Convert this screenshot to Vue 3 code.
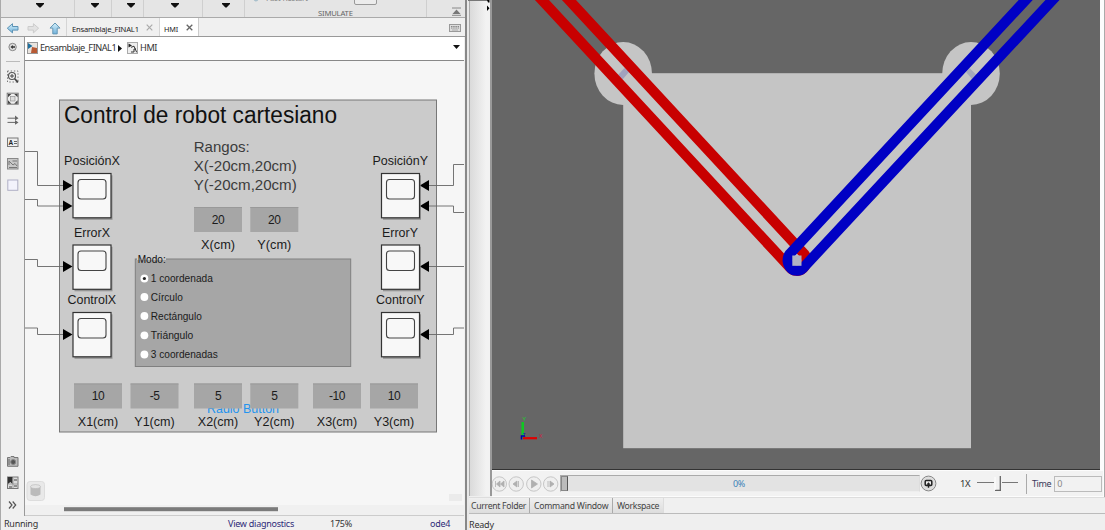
<script setup>
const ribbonGroups = [
  { id: 'a', cls: 'g1' }, { id: 'b', cls: 'g2' }, { id: 'c', cls: 'g3' }, { id: 'd', cls: 'g4' }, { id: 'e', cls: 'g5' }
]
const scopes = [
  { x: 73, y: 173.5, label: 'PosiciónX', lx: 64, w: 56 },
  { x: 73, y: 245, label: 'ErrorX', lx: 74, w: 36 },
  { x: 73, y: 312.5, label: 'ControlX', lx: 67.5, w: 48.5 },
  { x: 381.5, y: 173.5, label: 'PosiciónY', lx: 372.5, w: 55.5 },
  { x: 381.5, y: 245, label: 'ErrorY', lx: 382, w: 36 },
  { x: 381.5, y: 312.5, label: 'ControlY', lx: 376, w: 48.5 }
]
const wires = [
  'M25 151.5H37.5V185.5H64', 'M25 199.5H37.5V206H64', 'M25 259.5H37.5V266.5H64', 'M25 328H37.5V334.5H64',
  'M464 164.5H453.5V185.5H428', 'M464 212.5H453.5V206H428', 'M464 266.5H428', 'M464 328H453.5V334.5H428'
]
const heads = [185.5, 206, 266.5, 334.5]
const ranges = [
  { t: 'Rangos:', y: 151.5, w: 56 }, { t: 'X(-20cm,20cm)', y: 170.5, w: 103 }, { t: 'Y(-20cm,20cm)', y: 189.5, w: 103 }
]
const edits = [
  { x: 194, y: 207, v: '20', l: 'X(cm)', ly: 249, w: 34 },
  { x: 250.3, y: 207, v: '20', l: 'Y(cm)', ly: 249, w: 34 },
  { x: 74, y: 383.5, v: '10', l: 'X1(cm)', ly: 426, w: 40.5 },
  { x: 130.5, y: 383.5, v: '-5', l: 'Y1(cm)', ly: 426, w: 40.5 },
  { x: 194, y: 383.5, v: '5', l: 'X2(cm)', ly: 426, w: 40.5 },
  { x: 250.3, y: 383.5, v: '5', l: 'Y2(cm)', ly: 426, w: 40.5 },
  { x: 313, y: 383.5, v: '-10', l: 'X3(cm)', ly: 426, w: 40.5 },
  { x: 370, y: 383.5, v: '10', l: 'Y3(cm)', ly: 426, w: 40.5 }
]
const modes = [
  { t: '1 coordenada', y: 278.5, w: 62, on: true }, { t: 'Círculo', y: 297, w: 32 }, { t: 'Rectángulo', y: 316, w: 51 },
  { t: 'Triángulo', y: 335.3, w: 42.5 }, { t: '3 coordenadas', y: 354.5, w: 67 }
]
</script>

<template>
  <div class="screen">
    <section class="editor">
      <header class="ribbon">
        <div v-for="g in ribbonGroups" :key="g.id" class="rgroup" :class="g.cls">
          <svg width="8" height="5" viewBox="0 0 8 5"><path d="M0 0H8V1L4.6 4.5H3.4L0 1Z" fill="#111" /></svg>
        </div>
        <div class="simgroup">
          <svg class="simtop" width="182" height="8" viewBox="245 0 182 8">
            <circle cx="256" cy="-1" r="2.4" fill="#a9c0cc" />
            <text x="266" y="1.3" font-size="8" fill="#888" textLength="42">Fast Restart</text>
            <rect x="354.5" y="-8" width="22" height="12.5" rx="1.5" fill="#ececec" stroke="#999" />
          </svg>
          <span class="simlabel">SIMULATE</span>
        </div>
        <svg class="collapse" width="9" height="9" viewBox="0 0 9 9"><path d="M0 1H9M0 8.3H9" stroke="#888" /><path d="M4.5 2.5L8.5 7H.5Z" fill="#777" /></svg>
      </header>

      <nav class="tabs">
        <svg class="nav" width="66" height="18" viewBox="0 0 66 18">
          <defs><linearGradient id="sky" x1="0" y1="0" x2="0" y2="1"><stop offset="0" stop-color="#d5f1fb" /><stop offset="1" stop-color="#72b2dc" /></linearGradient></defs>
          <path d="M7.3 10.2L12.5 5.7V8.5H18V12.1H12.5V14.9Z" fill="url(#sky)" stroke="#5c93b5" />
          <path d="M38.6 10.2L33.4 5.7V8.5H28V12.1H33.4V14.9Z" fill="#e2e2e2" stroke="#ccc" />
          <path d="M55 5L60 10.1H57.2V15.9H52.8V10.1H50Z" fill="url(#sky)" stroke="#6597b5" />
        </svg>
        <div class="tab first"><span>Ensamblaje_FINAL1</span><svg width="7" height="7" viewBox="0 0 7 7"><path d="M.7.7L6.3 6.3M6.3.7L.7 6.3" stroke="#aaa" stroke-width="1.2" /></svg></div>
        <div class="tab active"><span>HMI</span><svg width="7" height="7" viewBox="0 0 7 7"><path d="M.7.7L6.3 6.3M6.3.7L.7 6.3" stroke="#666" stroke-width="1.3" /></svg></div>
        <svg class="keyb" width="12" height="8" viewBox="0 0 12 8"><rect x=".5" y=".5" width="11" height="7" fill="#ddd" stroke="#999" /><path d="M2 2.5H10M2 4H10" stroke="#888" stroke-dasharray="1.5 .7" /><path d="M3 6H9" stroke="#aaa" /></svg>
      </nav>

      <div class="workspace">
        <aside class="tools">
          <svg width="24" height="479" viewBox="0 37 24 479">
            <circle cx="12.6" cy="47" r="3.7" fill="#ddd" stroke="#888" /><path d="M10.5 47L12.8 45V46.2H15V47.8H12.8V49Z" fill="#333" />
            <path d="M6 61.5H20" stroke="#bbb" />
            <rect x="7.5" y="71" width="10.5" height="11" fill="none" stroke="#777" stroke-dasharray="1.4 1.8" />
            <circle cx="12" cy="76" r="3.5" fill="#f3f3f3" stroke="#555" stroke-width="1.2" /><path d="M12 74V78M10 76H14" stroke="#444" /><path d="M14.7 78.8L18 82.4" stroke="#444" stroke-width="1.7" />
            <rect x="7.2" y="93.2" width="11" height="11" fill="#eee" stroke="#777" /><path d="M8 97.3V94H11.3ZM14.2 94H17.6V97.3ZM8 100.3V103.7H11.3ZM17.6 100.3V103.7H14.2Z" fill="#444" /><rect x="10.5" y="96.5" width="4.5" height="4.5" fill="#ddd" stroke="#888" stroke-width=".6" />
            <path d="M7.5 118.2H17M7.5 122.4H17" stroke="#666" /><path d="M15 115.6L18.5 118.2L15 120.6ZM15 120L18.5 122.4L15 124.8Z" fill="#666" />
            <rect x="7.5" y="138" width="10.5" height="8.5" fill="#eee" stroke="#777" /><text x="8.5" y="145" font-size="6.5" font-weight="bold" fill="#222">A</text><path d="M14 141.5H17M14 143.5H17" stroke="#666" />
            <rect x="7.5" y="158.5" width="10.5" height="10.5" fill="#c8c8c8" stroke="#888" /><path d="M9 165V161L11 163L13 165L15 163.5L17 166M9 167.5H17M12.5 161H17" fill="none" stroke="#777" />
            <rect x="7.8" y="180" width="10" height="10.3" fill="#f3f3fc" stroke="#b0b0c5" />
            <path d="M7.5 457.5H10L11 456.5H14V457.5H18V466.3H7.5Z" fill="#bbb" stroke="#777" /><circle cx="13.2" cy="462" r="2.5" fill="#555" stroke="#888" /><path d="M9 459V465" stroke="#666" />
            <rect x="7.5" y="477" width="10.5" height="11.5" fill="#ddd" stroke="#777" /><path d="M8 477H12.5V484L10.3 482L8 484Z" fill="#333" /><path d="M14 480H17M14 486H17M9 487H12" stroke="#777" stroke-width="1.5" /><path d="M13 478V488M8 484H18" stroke="#888" stroke-width=".7" />
            <path d="M9 501.5L12 505L9 508.5M12.7 501.5L15.7 505L12.7 508.5" fill="none" stroke="#555" stroke-width="1.2" />
          </svg>
        </aside>
        <div class="model">
          <div class="crumbs">
            <svg width="11" height="12" viewBox="0 0 11 12"><rect x=".5" y=".5" width="10" height="11" fill="#e9e4df" stroke="#999" /><path d="M1 1L5.5 4L1 7Z" fill="#1c6f9e" /><path d="M5 5L10 6V11H4Z" fill="#b85a35" /></svg>
            <span class="c1">Ensamblaje_FINAL1</span>
            <svg class="play" width="4" height="7" viewBox="0 0 4 7"><path d="M0 0L4 3.5L0 7Z" fill="#111" /></svg>
            <svg width="11" height="12" viewBox="0 0 11 12"><rect x=".5" y=".5" width="10" height="11" fill="#eee" stroke="#aaa" /><path d="M1.5 1.5L5 3.5L1.5 5.5Z" fill="#222" /><path d="M4 5.3L7 4.2L9.7 10.3M4 10H7V7H9" fill="none" stroke="#333" /></svg>
            <span class="c2">HMI</span>
            <svg class="drop" width="7" height="4" viewBox="0 0 7 4"><path d="M0 0H7L3.5 4Z" fill="#111" /></svg>
          </div>
          <svg class="canvas" width="439" height="454" viewBox="25 61 439 454">
            <rect x="59.5" y="100" width="377" height="332" fill="#cbcbcb" stroke="#777" />
            <path v-for="w in wires" :key="w" :d="w" fill="none" stroke="#666" stroke-width=".9" />
            <g fill="#000">
              <path v-for="y in heads" :key="'l' + y" :d="`M63 ${y - 5.5}L72.5 ${y}L63 ${y + 5.5}Z`" />
              <path v-for="y in heads" :key="'r' + y" :d="`M429 ${y - 5.5}L419.8 ${y}L429 ${y + 5.5}Z`" />
            </g>
            <text x="64" y="123" font-size="23" textLength="273" lengthAdjust="spacingAndGlyphs" fill="#111">Control de robot cartesiano</text>
            <g v-for="s in scopes" :key="s.label">
              <rect :x="s.x + 1.5" :y="s.y + 1.8" width="38" height="44.5" fill="#777" opacity=".65" />
              <rect :x="s.x" :y="s.y" width="38" height="44.3" fill="#f8f8f8" stroke="#333" stroke-width="1.2" />
              <rect :x="s.x + 5" :y="s.y + 6" width="28" height="19.5" rx="3" fill="#f8f8f8" stroke="#444" stroke-width="1.1" />
              <text :x="s.lx" :y="s.y - 8.4" font-size="13.5" :textLength="s.w" lengthAdjust="spacingAndGlyphs" fill="#1b1b1b">{{ s.label }}</text>
            </g>
            <text v-for="r in ranges" :key="r.t" x="193.7" :y="r.y" font-size="15.5" :textLength="r.w" lengthAdjust="spacingAndGlyphs" fill="#3c3c3c">{{ r.t }}</text>
            <text x="207" y="412.6" font-size="12.8" textLength="72" lengthAdjust="spacingAndGlyphs" fill="#2493ee">Radio Button</text>
            <g v-for="e in edits" :key="e.l">
              <rect :x="e.x" :y="e.y" width="48" height="25" fill="#a6a6a6" />
              <path :d="`M${e.x} ${e.y + .5}H${e.x + 48}`" stroke="#999" />
              <text :x="e.x + 24" :y="e.y + 16.5" font-size="12" text-anchor="middle" fill="#1b1b1b" class="narrow">{{ e.v }}</text>
              <text :x="e.x + 24 - e.w / 2" :y="e.ly" font-size="13.5" :textLength="e.w" lengthAdjust="spacingAndGlyphs" fill="#1b1b1b">{{ e.l }}</text>
            </g>
            <rect x="135.3" y="259" width="215.4" height="107.5" fill="#a6a6a6" stroke="#808080" />
            <rect x="137" y="257" width="29" height="3" fill="#cbcbcb" />
            <text x="137.7" y="262.7" font-size="11.5" textLength="28" lengthAdjust="spacingAndGlyphs" fill="#111">Modo:</text>
            <g v-for="m in modes" :key="m.t">
              <circle cx="144.4" :cy="m.y" r="3.9" fill="#fff" />
              <circle v-if="m.on" cx="144.4" :cy="m.y" r="1.6" fill="#222" />
              <text x="150.8" :y="m.y + 3.6" font-size="11.8" :textLength="m.w" lengthAdjust="spacingAndGlyphs" fill="#1b1b1b">{{ m.t }}</text>
            </g>
            <rect x="27" y="481.5" width="17.5" height="19" rx="3" fill="#e9e9e9" stroke="#ddd" />
            <path d="M30.5 486.5V494.5Q35.5 498 40.5 494.5V486.5Z" fill="#bbb" /><ellipse cx="35.5" cy="486.6" rx="5" ry="2" fill="#e4e4e4" stroke="#b5b5b5" stroke-width=".6" />
            <rect x="449" y="494" width="13" height="7" fill="#ebebeb" />
            <rect x="25" y="505" width="439" height="10" fill="#f0f0f0" />
            <rect x="64" y="507.2" width="214" height="4" fill="#7b7b7b" />
          </svg>
        </div>
      </div>

      <footer class="status">
        <span class="s1">Running</span><span class="s2">View diagnostics</span><span class="s3">175%</span><span class="s4">ode4</span>
      </footer>
    </section>

    <section class="viewer">
      <div class="upper">
        <div class="gutter">
          <svg width="23" height="14" viewBox="0 0 23 14"><path d="M0 .5H20" stroke="#777" /><path d="M19 0H21.5V2.5H20ZM19 5.5L21.5 8.3L19 11Z" fill="#000" /></svg>
        </div>
        <div class="player">
          <svg class="scene" width="608" height="470" viewBox="492 0 608 470">
            <rect x="492" y="0" width="608" height="470" fill="#666" />
            <rect x="623.2" y="73.2" width="347.8" height="375" fill="#c5c5c5" />
            <ellipse cx="623.2" cy="73.5" rx="28.8" ry="31.5" fill="#c5c5c5" />
            <ellipse cx="971" cy="73.5" rx="28.8" ry="31.5" fill="#c5c5c5" />
            <path d="M618 75L624.5 68L629 72L622.5 79.5Z" fill="#a1a2bd" />
            <path d="M966 72L969.5 68L976 74.5L972 79Z" fill="#a4a9bb" />
            <path d="M532.7 -10L789.7 267.2A9.5 10.2 0 0 0 804.1 253.8L559.7 -10" fill="none" stroke="#c80000" stroke-width="10.3" />
            <path d="M1035 -10L789.9 253.7A9 10 0 0 0 804 267L1061.8 -10" fill="none" stroke="#0000c4" stroke-width="10.3" />
            <rect x="792.3" y="255.5" width="9.2" height="10.3" fill="#b0b2c4" />
            <path d="M522.7 422V438" stroke="#10c822" stroke-width="2.6" /><path d="M523 438.2H537" stroke="#e00000" stroke-width="2.2" />
            <path d="M521.5 439.5V436H525" fill="none" stroke="#0000aa" stroke-width="1.5" />
            <text x="522.4" y="421.4" font-size="6" fill="#19d02c">Y</text><text x="539" y="438" font-size="5.5" fill="#ce2042">X</text><text x="522.5" y="437" font-size="5" fill="#1111c0">Z</text>
            <path d="M492 469.5H1100" stroke="#333" />
          </svg>
          <div class="controls">
            <svg width="68" height="18" viewBox="492 0 68 18">
              <g fill="#efefef" stroke="#c6c6c6"><circle cx="499.3" cy="9" r="7.2" /><circle cx="516.2" cy="9" r="7.2" /><circle cx="533.8" cy="9" r="7.2" /><circle cx="550.7" cy="9" r="7.2" /></g>
              <path d="M495.5 6V12M500 6L496.5 9L500 12ZM504 6L500.5 9L504 12ZM517 6L513 9L517 12ZM518.5 6V12M531.5 5L537.5 9L531.5 13ZM548 6V12M550 6L554 9L550 12Z" fill="#b0b0b0" stroke="#b0b0b0" stroke-width=".8" />
            </svg>
            <div class="track"><i></i><span>0%</span></div>
            <svg class="loop" width="17" height="17" viewBox="0 0 17 17"><circle cx="8.5" cy="8.5" r="7.4" fill="#ddd" stroke="#888" /><rect x="5.2" y="5.5" width="6.6" height="5" rx="1" fill="#eee" stroke="#222" stroke-width="1.5" /><path d="M8.5 7.3L6.3 9.7H7.8V12.8H9.2V9.7H10.7Z" fill="#222" /></svg>
            <span class="rate">1X</span>
            <svg width="42" height="18" viewBox="0 0 42 18"><path d="M0 7.5H17M25 7.5H41" stroke="#777" /><path d="M23.3 1V15.5M18 15.3H24" fill="none" stroke="#666" stroke-width="1.3" /><path d="M18 2V15" stroke="#fff" /></svg>
            <i class="sep"></i><span class="time">Time</span><span class="field">0</span>
          </div>
        </div>
      </div>
      <div class="docktabs"><span class="d1">Current Folder</span><span class="d2">Command Window</span><span class="d3">Workspace</span></div>
      <footer class="ready">Ready</footer>
    </section>
  </div>
</template>

<style>
body { overflow: hidden; }
</style>
<style scoped>
* { box-sizing: border-box; }
svg { display: block; flex: none; overflow: hidden; }
.screen { display: flex; width: 1105px; height: 530px; overflow: hidden; background: #efefef; color: #333; font: 9px/12px "Noto Sans", "Open Sans", sans-serif; white-space: nowrap; }
.editor { width: 467px; height: 530px; flex: none; display: flex; flex-direction: column; border-left: 1px solid #aaa; border-right: 2px solid #888; background: #f0f0f0; }
.ribbon { height: 18px; flex: none; display: flex; background: #e5e5e5; border-bottom: 1px solid #aaa; }
.rgroup { padding-top: 3px; border-right: 1px solid #cfcfcf; }
.g1 { width: 74px; padding-left: 35px; }
.g2 { width: 37px; padding-left: 16px; }
.g3 { width: 32px; padding-left: 15px; }
.g4 { width: 59px; padding-left: 27px; }
.g5 { width: 42px; padding-left: 19px; }
.simgroup { width: 182px; display: flex; flex-direction: column; border-right: 1px solid #cfcfcf; }
.simlabel { padding-left: 73px; font-size: 7.7px; line-height: 10px; letter-spacing: -0.2px; color: #666; }
.collapse { margin: 7px 0 0 25px; }
.tabs { height: 18px; flex: none; display: flex; }
.nav { margin-left: -1px; }
.tab { display: flex; align-items: center; justify-content: space-between; height: 18px; padding-top: 3px; font-size: 7.6px; color: #222; border-left: 1px solid #d5d5d5; }
.tab svg { margin-bottom: 2px; }
.first { width: 93px; padding-left: 5px; padding-right: 6px; letter-spacing: -0.18px; }
.active { width: 40px; padding: 3px 5px 0 4px; background: #fff; border-right: 1px solid #ccc; font-size: 7.3px; letter-spacing: -0.2px; }
.keyb { margin: 6px 4px 0 auto; }
.workspace { flex: 1; display: flex; border-top: 1px solid #999; min-height: 0; }
.tools { width: 24px; border-right: 1px solid #999; }
.tools svg { margin-left: -1px; font-family: "Liberation Sans", sans-serif; }
.model { width: 439px; display: flex; flex-direction: column; border-bottom: 1px solid #ccc; }
.crumbs { height: 24px; flex: none; display: flex; align-items: center; background: #fff; border-bottom: 1px solid #888; padding: 0 4px 1px 2px; font-size: 9.2px; color: #333; }
.c1 { width: 76px; margin-left: 2px; letter-spacing: -0.49px; }
.play { margin: 0 5px 0 2px; }
.c2 { margin-left: 2px; letter-spacing: -0.4px; }
.drop { margin-left: auto; margin-bottom: 2px; }
.canvas { background: #f6f6f6; font-family: "Liberation Sans", Arial, sans-serif; }
.narrow { letter-spacing: -0.5px; }
.status { height: 14px; flex: none; display: flex; padding: 2px 0 0 3px; font-size: 9px; line-height: 12px; letter-spacing: -0.25px; }
.s1 { width: 224px; }
.s2 { width: 102px; color: #2d2a78; }
.s3 { width: 100px; }
.s4 { color: #2d2a78; }
.viewer { flex: 1; display: flex; flex-direction: column; border-left: 2px solid #e8e8e8; }
.upper { display: flex; height: 497px; }
.gutter { width: 23px; height: 496px; flex: none; background: linear-gradient(90deg, #dadada, #f2f2f2 80%); border-left: 1px solid #aaa; border-right: 2px solid #999; }
.gutter svg { margin-left: -2px; }
.player { display: flex; flex-direction: column; width: 613px; border-right: 1px solid #aaa; background: #fcfcfc; }
.controls { width: 611px; height: 25px; display: flex; align-items: center; background: #f2f2f2; margin-top: 1px; }
.track { width: 360px; height: 17px; background: #e3e3e3; border: 1px solid #aaa; border-right-color: #ddd; border-bottom-color: #eee; display: flex; align-items: center; color: #3b83b9; font-size: 9px; }
.track i { width: 7px; height: 15px; background: #bbb; border: 1px solid #888; border-right-color: #555; }
.track span { margin-left: 165px; letter-spacing: -0.5px; }
.rate { width: 17px; margin-left: 23px; font-size: 9.5px; letter-spacing: -0.5px; }
.sep { width: 1px; height: 20px; background: #aaa; margin-left: 7px; }
.time { margin: 0 3px 0 5px; font-size: 9px; letter-spacing: -0.4px; color: #39395a; }
.field { width: 48px; height: 16px; border: 1px solid #bbb; padding: 1px 2px; color: #888; }
.docktabs { height: 17px; display: flex; background: #f0f0f0; border-top: 1px solid #ddd; border-bottom: 1px solid #bbb; }
.docktabs span { height: 15px; line-height: 16px; font-size: 8.7px; background: linear-gradient(#efefef, #ddd); border-right: 1px solid #aaa; color: #444; }
.docktabs .d1 { width: 61px; padding-left: 2px; letter-spacing: -0.3px; }
.docktabs .d2 { width: 83px; padding-left: 4px; letter-spacing: -0.25px; }
.docktabs .d3 { width: 51px; padding-left: 4px; letter-spacing: -0.3px; border-right-color: #ddd; }
.ready { height: 16px; line-height: 22px; font-size: 9px; letter-spacing: -0.2px; }
</style>
